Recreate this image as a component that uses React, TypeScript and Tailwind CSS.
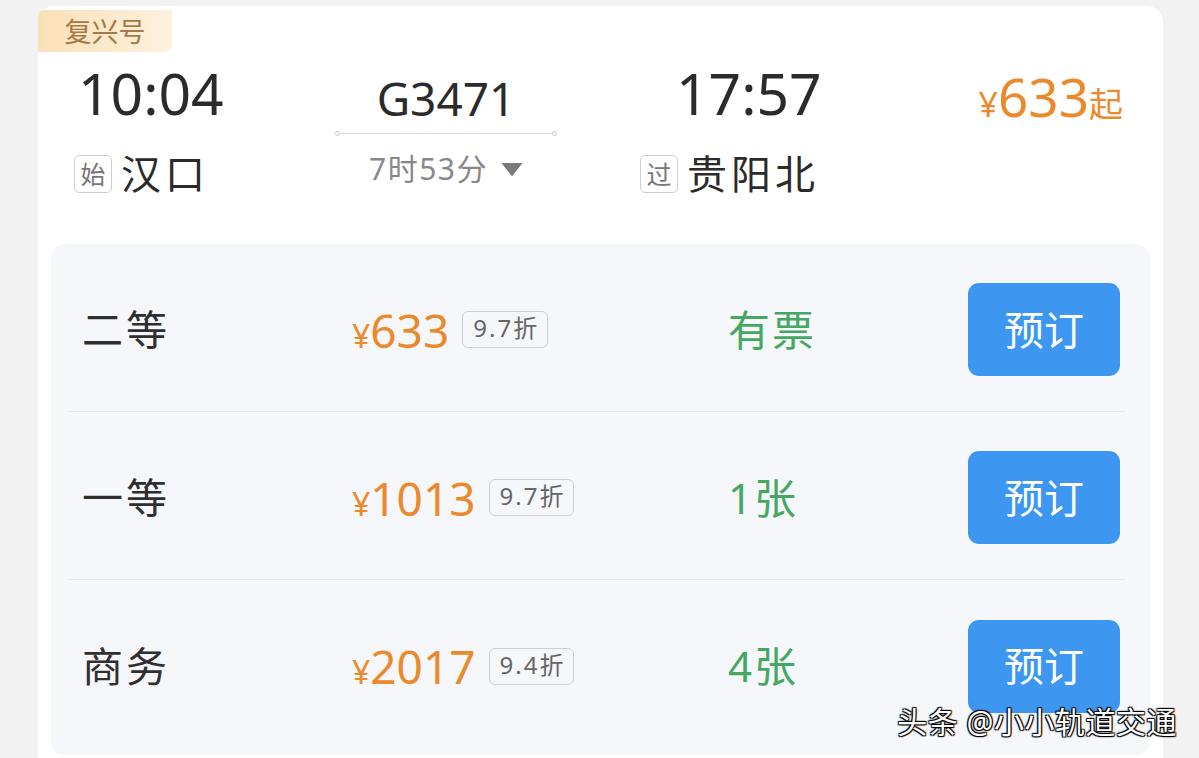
import React from "react";

const font = "font-['Noto_Sans','Noto_Sans_CJK_SC',sans-serif]";

interface Seat {
  name: string;
  price: string;
  discount: string;
  left: string;
}

const seats: Seat[] = [
  { name: "二等", price: "633", discount: "9.7折", left: "有票" },
  { name: "一等", price: "1013", discount: "9.7折", left: "1张" },
  { name: "商务", price: "2017", discount: "9.4折", left: "4张" },
];

function StationTag({ label }: { label: string }) {
  return (
    <span className="flex h-[38px] w-[38px] items-center justify-center rounded-[5px] border-[1.5px] border-[#cfcfcf] text-[25px] leading-none text-[#777]">
      {label}
    </span>
  );
}

function SeatRow({ seat, last }: { seat: Seat; last: boolean }) {
  return (
    <div
      className={`flex items-center pl-[14px] pr-[5px] ${
        last ? "h-[175px] pb-[3px]" : "h-[168px] border-b-[1.5px] border-[#e6e8eb] pt-[4px]"
      }`}
    >
      <div className="w-[270px] text-[41px] leading-none tracking-[3px] text-[#2f2f2f]">{seat.name}</div>
      <div className="flex w-[376px] items-center">
        <span className="flex items-baseline text-[#ea8a2c]">
          <span className="text-[32px] leading-none">¥</span>
          <span className="text-[46px] leading-none">{seat.price}</span>
        </span>
        <span className="ml-[13px] flex h-[37px] items-start rounded-[6px] border-[1.5px] border-[#cfcfcf] pl-[10px] pr-[8px] pt-[4px] text-[24px] leading-none tracking-[2px] text-[#666]">
          {seat.discount}
        </span>
      </div>
      <div className="flex-1 text-[42px] leading-none tracking-[2px] text-[#45a862]">{seat.left}</div>
      <button className="flex h-[93px] w-[152px] items-center justify-center rounded-[11px] bg-[#3d97f1] text-[40px] leading-none text-white">
        预订
      </button>
    </div>
  );
}

export default function App() {
  return (
    <div className={`relative h-[758px] w-full overflow-hidden bg-[#f2f2f2] pl-[38px] pr-[36px] pt-[6px] ${font}`}>
      <div className="h-full rounded-t-[16px] bg-white">
        <div className="pt-[4px]">
          <div className="flex h-[42px] w-[134px] items-center justify-center rounded-br-[8px] rounded-tl-[6px] bg-gradient-to-r from-[#fbe0b6] to-[#fdf1df] text-[27px] leading-none text-[#a57b45]">
            复兴号
          </div>
        </div>

        <div className="flex px-[40px] pt-[10px]">
          <div className="w-[257px]">
            <div className="h-[62px] text-[57px] leading-[62px] text-[#2b2b2b]">10:04</div>
            <div className="mt-[30px] flex items-center">
              <span className="-ml-[4px]">
                <StationTag label="始" />
              </span>
              <span className="ml-[9px] text-[40px] leading-none tracking-[4px] text-[#2b2b2b]">汉口</span>
            </div>
          </div>

          <div className="flex w-[222px] flex-col items-center">
            <div className="mt-[12px] h-[48px] text-[46px] leading-[48px] text-[#2b2b2b]">G3471</div>
            <div className="mt-[9px] flex w-full items-center">
              <span className="h-[5px] w-[5px] rounded-full border border-[#c8c8c8]" />
              <span className="h-[1.5px] flex-1 bg-[#dcdcdc]" />
              <span className="h-[5px] w-[5px] rounded-full border border-[#c8c8c8]" />
            </div>
            <div className="mt-[18px] flex items-center text-[30px] leading-none tracking-[1.5px] text-[#888]">
              7时53分
              <svg width="22" height="15" viewBox="0 0 22 15" className="ml-[13px]">
                <path d="M0.5 1 H21.5 L11 14.5 Z" fill="#7a7a7a" />
              </svg>
            </div>
          </div>

          <div className="ml-[83px] flex-1">
            <div className="ml-[36px] h-[62px] text-[57px] leading-[62px] text-[#2b2b2b]">17:57</div>
            <div className="mt-[30px] flex items-center">
              <StationTag label="过" />
              <span className="ml-[9px] text-[40px] leading-none tracking-[4px] text-[#2b2b2b]">贵阳北</span>
            </div>
          </div>

          <div className="flex h-[62px] items-baseline pt-[8px] text-[#ea8a2c]">
            <span className="text-[34px] leading-none">¥</span>
            <span className="text-[53px] leading-none">633</span>
            <span className="text-[34px] leading-none">起</span>
          </div>
        </div>

        <div className="mx-[13px] mt-[50px] rounded-[14px] bg-[#f5f7fa] pl-[17px] pr-[25px]">
          {seats.map((s, i) => (
            <SeatRow key={s.name} seat={s} last={i === seats.length - 1} />
          ))}
        </div>
      </div>

      <div className="absolute bottom-[21px] right-[22px] text-[30px] leading-none tracking-[0.5px] text-white [text-shadow:-1px_1px_1px_#000,1px_1px_1px_#000,-1px_-1px_1px_#000,1px_-1px_1px_#000]">
        头条 @小小轨道交通
      </div>
    </div>
  );
}
